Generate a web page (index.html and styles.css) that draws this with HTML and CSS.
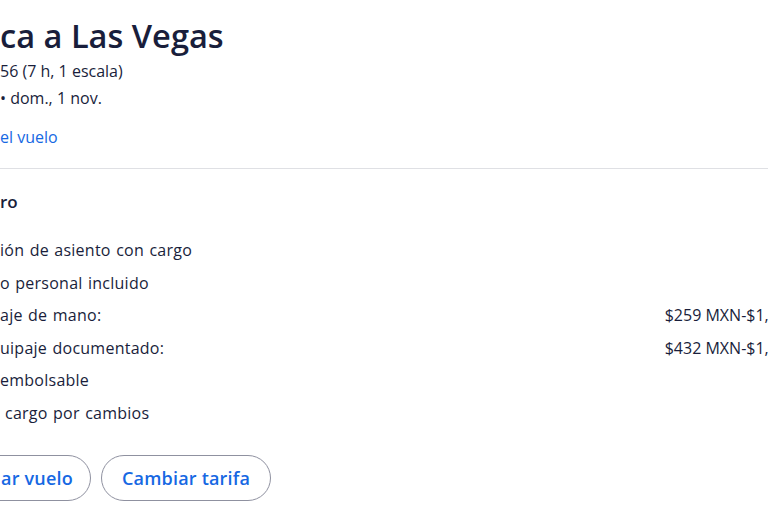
FILE: index.html
```html
<!DOCTYPE html>
<html lang="es">
<head>
<meta charset="utf-8">
<title>Detalles de tarifa</title>
<link rel="stylesheet" href="styles.css">
</head>
<body>
<main class="fare">
  <header class="summary">
    <h1 class="title">ca a Las Vegas</h1>
    <p class="meta">56 (7 h, 1 escala)</p>
    <p class="meta meta-date">• dom., 1 nov.</p>
    <a class="details-link" href="#">el vuelo</a>
  </header>
  <hr class="divider">
  <section class="fare-info">
    <h2 class="fare-name">ro</h2>
    <ul class="features">
      <li class="feature"><span class="label">ión de asiento con cargo</span></li>
      <li class="feature"><span class="label">o personal incluido</span></li>
      <li class="feature"><span class="label">aje de mano:</span><span class="price">$259 MXN-$1,036 MXN</span></li>
      <li class="feature"><span class="label">uipaje documentado:</span><span class="price">$432 MXN-$1,728 MXN</span></li>
      <li class="feature"><span class="label">embolsable</span></li>
      <li class="feature"><span class="label label-indent">cargo por cambios</span></li>
    </ul>
    <div class="actions">
      <button class="btn btn-cut" type="button">ar vuelo</button>
      <button class="btn" type="button">Cambiar tarifa</button>
    </div>
  </section>
</main>
</body>
</html>
```

FILE: styles.css
```css
html, body {
  margin: 0;
  padding: 0;
  background: #ffffff;
  overflow: hidden;
}

body {
  font-family: "Open Sans", "Noto Sans", sans-serif;
  color: #191e3b;
  width: 768px;
  height: 512px;
}

.fare {
  display: flex;
  flex-direction: column;
  padding-top: 16px;
}

.summary {
  display: flex;
  flex-direction: column;
  align-items: flex-start;
}

.title {
  margin: 0;
  font-size: 32.6px;
  line-height: 40px;
  font-weight: 600;
}

.meta {
  margin: 2px 0 0;
  font-size: 16px;
  line-height: 27px;
}

.meta-date {
  margin-top: 0;
}

.details-link {
  margin-top: 13px;
  font-size: 16px;
  line-height: 24px;
  color: #1668e3;
  text-decoration: none;
}

.divider {
  margin: 19px 0 0;
  border: 0;
  border-top: 1px solid #dfe0e4;
}

.fare-info {
  display: flex;
  flex-direction: column;
}

.fare-name {
  margin: 21px 0 0;
  font-size: 17px;
  line-height: 24px;
  font-weight: 600;
}

.features {
  list-style: none;
  margin: 24px 0 0;
  padding: 0;
  display: flex;
  flex-direction: column;
  gap: 8.6px;
  width: 836px;
}

.feature {
  display: flex;
  justify-content: space-between;
  font-size: 16px;
  line-height: 24px;
}

.label {
  letter-spacing: 0.25px;
  word-spacing: 1px;
}

.label-indent {
  padding-left: 5px;
}

.actions {
  display: flex;
  gap: 10px;
  margin-top: 30px;
}

.btn {
  font-family: inherit;
  font-size: 18px;
  font-weight: 600;
  line-height: 24px;
  letter-spacing: 0.2px;
  color: #1668e3;
  background: #ffffff;
  border: 1px solid #8f91a0;
  border-radius: 24px;
  padding: 10px 20px 10px 20px;
  height: 46px;
}

.btn-cut {
  margin-left: -40px;
  padding-left: 40px;
  padding-right: 17px;
}
```
